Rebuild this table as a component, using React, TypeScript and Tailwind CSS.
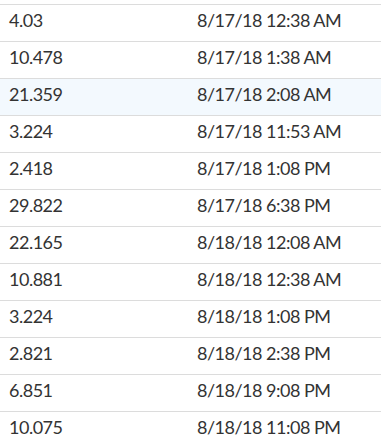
const ROWS: [string, string][] = [
  ["4.03", "8/17/18 12:38 AM"],
  ["10.478", "8/17/18 1:38 AM"],
  ["21.359", "8/17/18 2:08 AM"],
  ["3.224", "8/17/18 11:53 AM"],
  ["2.418", "8/17/18 1:08 PM"],
  ["29.822", "8/17/18 6:38 PM"],
  ["22.165", "8/18/18 12:08 AM"],
  ["10.881", "8/18/18 12:38 AM"],
  ["3.224", "8/18/18 1:08 PM"],
  ["2.821", "8/18/18 2:38 PM"],
  ["6.851", "8/18/18 9:08 PM"],
  ["10.075", "8/18/18 11:08 PM"],
];

export default function App() {
  return (
    <div className="w-[381px] h-[445px] overflow-hidden bg-white pt-[4px] font-['Lato',sans-serif] text-[18px] leading-[22px] tracking-[-0.5px] text-[#333]">
      {ROWS.map(([value, date], i) => (
        <div
          key={i}
          className={`grid grid-cols-[188px_1fr] h-[37px] pt-[4px] border-t border-[#dcdcdc] ${
            i === 2 ? "bg-[#f3f9fe]" : "bg-white"
          }`}
        >
          <div className="pl-[9px]">{value}</div>
          <div className="pl-[9px]">{date}</div>
        </div>
      ))}
    </div>
  );
}
